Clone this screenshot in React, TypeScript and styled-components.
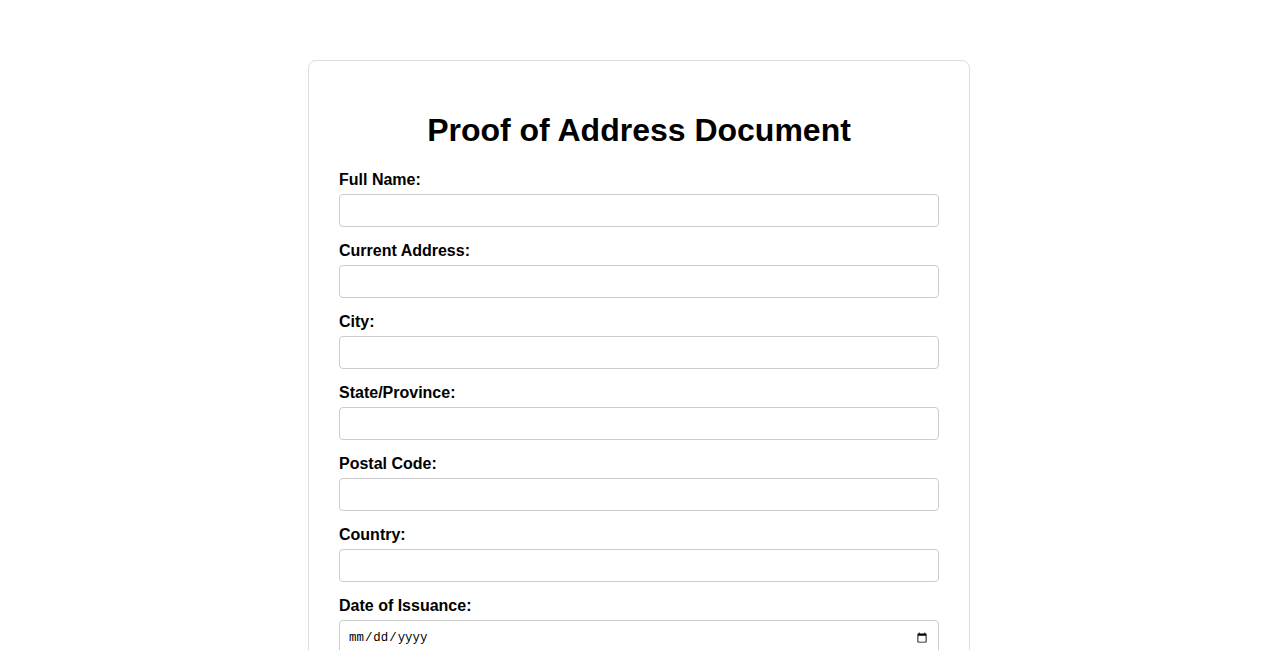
import React from 'react';
import styled, { createGlobalStyle } from 'styled-components';

const fields = [
  { label: 'Full Name:', type: 'text' },
  { label: 'Current Address:', type: 'text' },
  { label: 'City:', type: 'text' },
  { label: 'State/Province:', type: 'text' },
  { label: 'Postal Code:', type: 'text' },
  { label: 'Country:', type: 'text' },
  { label: 'Date of Issuance:', type: 'date' },
];

export default function App(): React.ReactElement {
  return (
    <>
      <GlobalStyle />
      <Card>
        <Title>Proof of Address Document</Title>
        <form>
          {fields.map((field) => (
            <Field key={field.label}>
              <Label>{field.label}</Label>
              <Input type={field.type} />
            </Field>
          ))}
        </form>
      </Card>
    </>
  );
}

const GlobalStyle = createGlobalStyle`
  html, body {
    margin: 0;
    background: #ffffff;
  }
  body {
    font-family: 'Liberation Sans', Arial, sans-serif;
    color: #000000;
  }
`;

const Card = styled.div`
  width: 600px;
  margin: 60px auto 40px;
  padding: 30px;
  border: 1px solid #dddddd;
  border-radius: 8px;
`;

const Title = styled.h1`
  margin: 21px 0 22px;
  font-size: 32px;
  font-weight: bold;
  text-align: center;
`;

const Field = styled.div`
  margin-bottom: 15px;
`;

const Label = styled.label`
  display: block;
  margin-bottom: 5px;
  font-size: 16px;
  font-weight: bold;
`;

const Input = styled.input`
  display: block;
  box-sizing: border-box;
  width: 100%;
  padding: 8px;
  border: 1px solid #cccccc;
  border-radius: 4px;
  background: #ffffff;
  font-family: 'Liberation Sans', Arial, sans-serif;
  font-size: 13.33px;

  &[type='date'] {
    padding-top: 9px;
    font-family: 'Liberation Mono', monospace;
    font-size: 12.4px;
  }
`;
